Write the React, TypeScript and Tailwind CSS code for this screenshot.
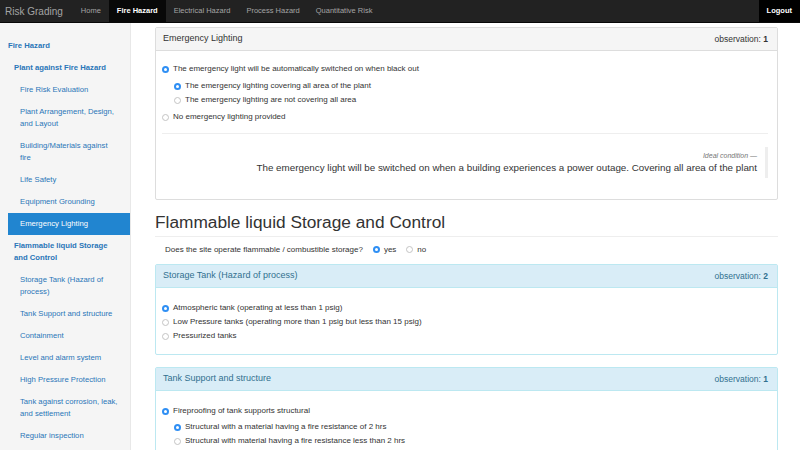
import React from 'react';

type NavItem = { lines: string[]; level: number; active?: boolean };

const sideItems: NavItem[] = [
    { lines: ['Fire Hazard'], level: 0 },
    { lines: ['Plant against Fire Hazard'], level: 1 },
    { lines: ['Fire Risk Evaluation'], level: 2 },
    { lines: ['Plant Arrangement, Design,', 'and Layout'], level: 2 },
    { lines: ['Building/Materials against', 'fire'], level: 2 },
    { lines: ['Life Safety'], level: 2 },
    { lines: ['Equipment Grounding'], level: 2 },
    { lines: ['Emergency Lighting'], level: 2, active: true },
    { lines: ['Flammable liquid Storage', 'and Control'], level: 1 },
    { lines: ['Storage Tank (Hazard of', 'process)'], level: 2 },
    { lines: ['Tank Support and structure'], level: 2 },
    { lines: ['Containment'], level: 2 },
    { lines: ['Level and alarm system'], level: 2 },
    { lines: ['High Pressure Protection'], level: 2 },
    { lines: ['Tank against corrosion, leak,', 'and settlement'], level: 2 },
    { lines: ['Regular inspection'], level: 2 },
];

const Radio = ({ checked }: { checked?: boolean }) =>
    checked ? (
        <span className="w-[7px] h-[7px] shrink-0 rounded-full bg-[#2f8ff4] flex items-center justify-center">
            <span className="w-[3px] h-[3px] rounded-full bg-white" />
        </span>
    ) : (
        <span className="w-[7px] h-[7px] shrink-0 rounded-full border border-[#c4c4c4] bg-white" />
    );

const Option = ({ text, checked, sub }: { text: string; checked?: boolean; sub?: boolean }) => (
    <div className={`flex items-center h-[14px] gap-[4px] ${sub ? 'ml-[12px]' : ''}`}>
        <Radio checked={checked} />
        <span>{text}</span>
    </div>
);

const Navbar = () => {
    const links = ['Home', 'Fire Hazard', 'Electrical Hazard', 'Process Hazard', 'Quantitative Risk'];
    return (
        <nav className="h-[23px] bg-[#222] border-b border-[#080808] flex items-stretch text-[7.5px] text-[#a4a4a4]">
            <div className="pl-[5px] pr-[10px] flex items-center text-[10px]">Risk Grading</div>
            {links.map((l) => (
                <div
                    key={l}
                    className={`px-[8px] flex items-center ${l === 'Fire Hazard' ? 'bg-[#080808] text-white font-bold' : ''}`}
                >
                    {l}
                </div>
            ))}
            <div className="flex-1" />
            <div className="px-[8px] flex items-center bg-black text-white font-bold">Logout</div>
        </nav>
    );
};

const Sidebar = () => (
    <aside className="w-[131px] shrink-0 bg-[#f5f5f5] border-r border-[#e8e8e8] pt-[12px] text-[7.7px] leading-[12px]">
        {sideItems.map((item, i) => (
            <div
                key={i}
                className={`ml-[8px] py-[5px] whitespace-nowrap ${
                    item.level === 0 ? 'pl-0 font-bold' : item.level === 1 ? 'pl-[6px] font-bold' : 'pl-[12px]'
                } ${item.active ? 'bg-[#2185d0] text-white' : 'text-[#2a76b8]'}`}
            >
                {item.lines.map((ln) => (
                    <div key={ln}>{ln}</div>
                ))}
            </div>
        ))}
    </aside>
);

export default function App() {
    return (
        <div className="w-[800px] h-[450px] overflow-hidden bg-white text-[#333] font-['Liberation_Sans',Arial,sans-serif] text-[8px]">
            <Navbar />
            <div className="flex h-[427px]">
                <Sidebar />
                <main className="flex-1 pl-[24px] pr-[22px] pt-[4px]">
                    {/* emergency lighting */}
                    <div className="border border-[#ddd] rounded-[2px]">
                        <div className="h-[23px] bg-[#f5f5f5] border-b border-[#ddd] flex items-center justify-between pl-[7px] pr-[9px]">
                            <span className="text-[9px]">Emergency Lighting</span>
                            <span className="text-[8.5px]">
                                observation: <b>1</b>
                            </span>
                        </div>
                        <div className="px-[6px] pt-[11px] pb-[21px]">
                            <Option text="The emergency light will be automatically switched on when black out" checked />
                            <div className="mt-[3px]">
                                <Option sub checked text="The emergency lighting covering all area of the plant" />
                                <Option sub text="The emergency lighting are not covering all area" />
                            </div>
                            <div className="mt-[3px]">
                                <Option text="No emergency lighting provided" />
                            </div>
                            <div className="mt-[9px] mr-[3px] border-t border-[#eee]" />
                            <div className="mt-[13px] mr-[3px] flex justify-end">
                                <div className="border-r-[3px] border-[#eee] pr-[8px] py-[3px] text-right">
                                    <div className="text-[7px] leading-[11px] italic text-[#777]">Ideal condition &mdash;</div>
                                    <div className="text-[9.8px] leading-[14px]">
                                        The emergency light will be switched on when a building experiences a power outage. Covering all area of the plant
                                    </div>
                                </div>
                            </div>
                        </div>
                    </div>

                    <div className="mt-[12px] border-b border-[#eee] pb-[4px]">
                        <h2 className="text-[17.3px] leading-[20px]">Flammable liquid Storage and Control</h2>
                    </div>

                    <div className="mt-[6px] pl-[10px] h-[13px] flex items-center">
                        <span>Does the site operate flammable / combustible storage?</span>
                        <span className="ml-[10px] flex items-center gap-[4px]">
                            <Radio checked />
                            yes
                        </span>
                        <span className="ml-[10px] flex items-center gap-[4px]">
                            <Radio />
                            no
                        </span>
                    </div>

                    {/* storage tank */}
                    <div className="mt-[8px] border border-[#bce8f1] rounded-[2px]">
                        <div className="h-[23px] bg-[#d9edf7] border-b border-[#bce8f1] flex items-center justify-between pl-[7px] pr-[9px] text-[#31708f]">
                            <span className="text-[9px]">Storage Tank (Hazard of process)</span>
                            <span className="text-[8.5px]">
                                observation: <b>2</b>
                            </span>
                        </div>
                        <div className="px-[6px] pt-[13px] pb-[11px]">
                            <Option checked text="Atmospheric tank (operating at less than 1 psig)" />
                            <Option text="Low Pressure tanks (operating more than 1 psig but less than 15 psig)" />
                            <Option text="Pressurized tanks" />
                        </div>
                    </div>

                    {/* tank support */}
                    <div className="mt-[12px] border border-[#bce8f1] rounded-[2px]">
                        <div className="h-[23px] bg-[#d9edf7] border-b border-[#bce8f1] flex items-center justify-between pl-[7px] pr-[9px] text-[#31708f]">
                            <span className="text-[9px]">Tank Support and structure</span>
                            <span className="text-[8.5px]">
                                observation: <b>1</b>
                            </span>
                        </div>
                        <div className="px-[6px] pt-[13px] pb-[11px]">
                            <Option checked text="Fireproofing of tank supports structural" />
                            <div className="mt-[2px]">
                                <Option sub checked text="Structural with a material having a fire resistance of 2 hrs" />
                                <Option sub text="Structural with material having a fire resistance less than 2 hrs" />
                            </div>
                        </div>
                    </div>
                </main>
            </div>
        </div>
    );
}
